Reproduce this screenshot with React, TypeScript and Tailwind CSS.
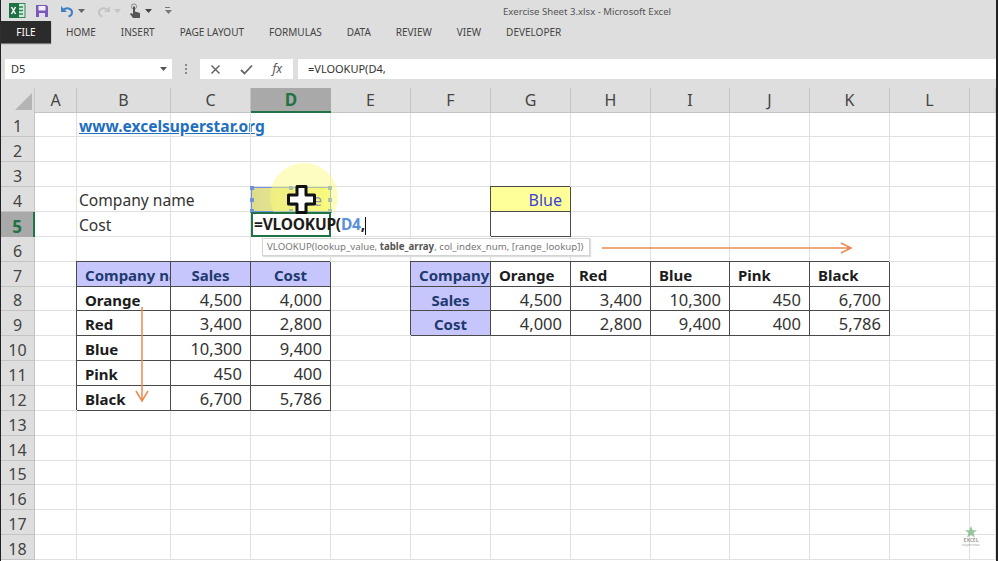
const columns = ['A', 'B', 'C', 'D', 'E', 'F', 'G', 'H', 'I', 'J', 'K', 'L', ''];
const tabs = ['HOME', 'INSERT', 'PAGE LAYOUT', 'FORMULAS', 'DATA', 'REVIEW', 'VIEW', 'DEVELOPER'];

const box = 'border-r border-b border-r-[#4a4a4a] border-b-[#4a4a4a] shadow-[-1px_-1px_0_#4a4a4a]';
const head = `${box} bg-[#c6c6fc] text-[#1f3a70] font-bold text-center text-[15px]`;
const side = `${box} bg-[#c6c6fc] text-[#1f3a70] font-bold text-center text-[15px]`;
const label = `${box} font-bold text-[#1c1c1c] pl-[8px] text-left text-[15px]`;
const num = `${box} text-[#333] text-right pr-[8px] text-[16.500px]`;

type Cell = { text?: string; cls?: string };

const cells: Record<string, Cell> = {
  B1: { text: 'www.excelsuperstar.org', cls: 'font-bold text-[#1f6fc0] underline pl-[2px] text-[15.500px] overflow-visible' },
  B4: { text: 'Company name', cls: 'text-[#333] pl-[2px] text-[15.600px] overflow-visible' },
  B5: { text: 'Cost', cls: 'text-[#333] pl-[2px] text-[15.600px]' },
  G4: { text: 'Blue', cls: `${box} bg-[#ffff99] text-[#3d44d8] text-right pr-[8px]` },
  G5: { cls: box },
  B7: { text: 'Company name', cls: `${head} !text-left pl-[8px]` },
  C7: { text: 'Sales', cls: head },
  D7: { text: 'Cost', cls: head },
  F7: { text: 'Company name', cls: `${head} !text-left pl-[8px]` },
  G7: { text: 'Orange', cls: label },
  H7: { text: 'Red', cls: label },
  I7: { text: 'Blue', cls: label },
  J7: { text: 'Pink', cls: label },
  K7: { text: 'Black', cls: label },
  F8: { text: 'Sales', cls: side },
  G8: { text: '4,500', cls: num },
  H8: { text: '3,400', cls: num },
  I8: { text: '10,300', cls: num },
  J8: { text: '450', cls: num },
  K8: { text: '6,700', cls: num },
  F9: { text: 'Cost', cls: side },
  G9: { text: '4,000', cls: num },
  H9: { text: '2,800', cls: num },
  I9: { text: '9,400', cls: num },
  J9: { text: '400', cls: num },
  K9: { text: '5,786', cls: num },
  B8: { text: 'Orange', cls: label },
  C8: { text: '4,500', cls: num },
  D8: { text: '4,000', cls: num },
  B9: { text: 'Red', cls: label },
  C9: { text: '3,400', cls: num },
  D9: { text: '2,800', cls: num },
  B10: { text: 'Blue', cls: label },
  C10: { text: '10,300', cls: num },
  D10: { text: '9,400', cls: num },
  B11: { text: 'Pink', cls: label },
  C11: { text: '450', cls: num },
  D11: { text: '400', cls: num },
  B12: { text: 'Black', cls: label },
  C12: { text: '6,700', cls: num },
  D12: { text: '5,786', cls: num },
};

const ExcelLogo = () => (
  <svg width="18" height="17" viewBox="0 0 18 17">
    <rect x="7" y="1.500" width="10" height="14" fill="#d5e8da" stroke="#2f8a57" />
    <path d="M10 5h5M10 8.500h5M10 12h5" stroke="#2f8a57" strokeWidth="1.500" />
    <rect x="1" y="1" width="10" height="15" fill="#1e7145" />
    <path d="M3.500 5l4 7M7.500 5l-4 7" stroke="#fff" strokeWidth="1.500" />
  </svg>
);

const SaveIcon = () => (
  <svg width="14" height="14" viewBox="0 0 14 14">
    <path d="M1 1h10.500L13 2.500V13H1z" fill="#7a58b8" />
    <rect x="3.500" y="2" width="7" height="4.500" fill="#f1edf8" />
    <rect x="4" y="9" width="6" height="4" fill="#e4ddf2" />
  </svg>
);

const UndoIcon = ({ color, flip }: { color: string; flip?: boolean }) => (
  <svg width="15" height="14" viewBox="0 0 15 14" className={flip ? '-scale-x-100' : ''}>
    <path d="M3 6.500c3-3.500 9-2.500 9 2 0 2-1.500 3.500-3.500 4" fill="none" stroke={color} strokeWidth="2" />
    <path d="M1 2v6h6z" fill={color} />
  </svg>
);

const TouchIcon = () => (
  <svg width="13" height="16" viewBox="0 0 13 16">
    <circle cx="5" cy="3.500" r="2.600" fill="none" stroke="#8a8a8a" />
    <path d="M4 3.500h2v5l5 1.500v5H4l-3-4 1-1 2 1z" fill="#555" />
  </svg>
);

const Caret = ({ color = '#666' }: { color?: string }) => (
  <svg width="7" height="4" viewBox="0 0 7 4">
    <path d="M0 0h7L3.500 4z" fill={color} />
  </svg>
);

export default function App() {
  return (
    <div className="relative w-[998px] h-[561px] overflow-hidden bg-[#dedede] pl-px pr-[2px] font-['Lato',sans-serif] shadow-[inset_1px_0_0_#222,inset_-2px_0_0_#222]">
      {/* Title bar */}
      <div className="relative h-[21px] flex items-center pl-[7px]">
        <ExcelLogo />
        <div className="ml-[9px]"><SaveIcon /></div>
        <div className="ml-[11px] flex items-center gap-[3px]">
          <UndoIcon color="#3f7fc4" />
          <Caret />
        </div>
        <div className="ml-[11px] flex items-center gap-[3px]">
          <UndoIcon color="#c4c4c4" flip />
          <Caret color="#c4c4c4" />
        </div>
        <div className="ml-[8px] flex items-center gap-[3px]">
          <TouchIcon />
          <Caret color="#444" />
        </div>
        <div className="ml-[13px] flex flex-col gap-[2px]">
          <div className="w-[5px] h-px bg-[#777]" />
          <Caret color="#777" />
        </div>
        <div className="absolute left-[502px] top-[4px] text-[9.600px] leading-[15px] text-[#555] font-['Open_Sans',sans-serif]">
          Exercise Sheet 3.xlsx - Microsoft Excel
        </div>
      </div>

      {/* Ribbon tabs */}
      <div className="h-[22px] flex items-stretch font-['Open_Sans',sans-serif] text-[10px] text-[#444]">
        <div className="w-[50px] bg-[#2b2b2b] text-white flex items-center justify-center shadow-[0_1px_1px_#777]">FILE</div>
        <div className="ml-[15px] flex items-center gap-[25px]">
          {tabs.map((tab) => (
            <span key={tab}>{tab}</span>
          ))}
        </div>
      </div>

      {/* Formula bar */}
      <div className="mt-[16px] h-[20px] flex items-stretch text-[11px] text-[#333] font-['Open_Sans',sans-serif]">
        <div className="ml-[4px] w-[167px] bg-white flex items-center justify-between pl-[6px] pr-[5px]">
          <span>D5</span>
          <Caret color="#555" />
        </div>
        <div className="w-[28px] flex flex-col items-center justify-center gap-[2px]">
          <div className="w-[2px] h-[2px] bg-[#888]" />
          <div className="w-[2px] h-[2px] bg-[#888]" />
          <div className="w-[2px] h-[2px] bg-[#888]" />
        </div>
        <div className="w-[93px] bg-white flex items-center justify-between pl-[10px] pr-[11px]">
          <svg width="11" height="11" viewBox="0 0 11 11">
            <path d="M1.500 1.500l8 8M9.500 1.500l-8 8" stroke="#666" strokeWidth="1.500" />
          </svg>
          <svg width="13" height="11" viewBox="0 0 13 11">
            <path d="M1 6l3.500 3.500L12 1.500" fill="none" stroke="#666" strokeWidth="1.800" />
          </svg>
          <span className="font-['Liberation_Serif',serif] italic text-[12px] text-[#555]">fx</span>
        </div>
        <div className="ml-[5px] flex-1 bg-white flex items-center pl-[10px]">=VLOOKUP(D4,</div>
      </div>

      {/* Sheet */}
      <div className="mt-[9px] h-[473px] grid grid-cols-[34px_42px_94px_80px_80px_80px_80px_80px_80px_79px_80px_80px_80px_26px] grid-rows-[24.500px] auto-rows-[24.870px] text-[16px] bg-white">
        <div className="relative bg-[#dedede] border-r border-[#c8c8c8]">
          <div className="absolute right-[2px] bottom-[3px] w-0 h-0 border-l-[17px] border-l-transparent border-b-[17px] border-b-[#b4b4b4]" />
        </div>
        {columns.map((col) =>
          col === 'D' ? (
            <div key={col} className="bg-[#a9a9a9] border-b-2 border-[#217346] pt-px flex items-center justify-center font-bold text-[#217346] text-[17px]">
              {col}
            </div>
          ) : (
            <div key={col || 'M'} className="bg-[#dedede] border-r border-b border-[#c4c4c4] pt-px flex items-center justify-center text-[#444] text-[16px]">
              {col}
            </div>
          ),
        )}
        {Array.from({ length: 18 }, (_, i) => i + 1).map((row) => (
          <Row key={row} row={row} />
        ))}
      </div>

      {/* Tooltip */}
      <div className="absolute left-[262px] top-[238px] h-[18px] w-[328px] bg-white border border-[#d4d4d4] shadow-[1px_1px_1px_#ddd] flex items-center pl-[4px] text-[9.700px] text-[#777] font-['Open_Sans',sans-serif] whitespace-nowrap">
        VLOOKUP(lookup_value,&nbsp;<b className="text-[#555]">table_array</b>, col_index_num, [range_lookup])
      </div>

      {/* Presenter arrows */}
      <svg className="absolute left-[600px] top-[240px]" width="256" height="16" viewBox="0 0 256 16">
        <path d="M2 8h249M241 3l10 5-10 5" fill="none" stroke="#ec8a50" strokeWidth="1.500" />
      </svg>
      <svg className="absolute left-[134px] top-[305px]" width="16" height="98" viewBox="0 0 16 98">
        <path d="M8 2v94M2 86l6 10 6-10" fill="none" stroke="#ec8a50" strokeWidth="1.500" />
      </svg>

      {/* Cursor highlight stops at the edit cell, then the cursor */}
      <div className="absolute left-[270px] top-[163px] w-[68px] h-[49px] overflow-hidden pointer-events-none">
        <div className="w-[68px] h-[68px] rounded-full bg-[#fbfb78]/45" />
      </div>
      <svg className="absolute left-[286px] top-[184px]" width="31" height="31" viewBox="0 0 31 31">
        <path d="M11 2.500h9v8.500h8.500v9H20v8.500h-9V20H2.500v-9H11z" fill="#fff" stroke="#111" strokeWidth="3" strokeLinejoin="round" />
      </svg>

      {/* Watermark */}
      <div className="absolute left-[962px] top-[526px] flex flex-col items-center text-[#777] opacity-70">
        <svg width="14" height="12" viewBox="0 0 14 12">
          <path d="M7 0l1.700 4.200H13L9.500 7l1.300 4.500L7 9l-3.800 2.500L4.500 7 1 4.200h4.300z" fill="#6fae78" />
        </svg>
        <span className="text-[5px] leading-[5px] font-bold">EXCEL</span>
        <span className="text-[4px] leading-[4px]">superstar</span>
      </div>
    </div>
  );
}

function Row({ row }: { row: number }) {
  return (
    <>
      {row === 5 ? (
        <div className="bg-[#a9a9a9] border-r-2 border-[#217346] pt-[4px] flex items-center justify-center font-bold text-[#217346] text-[17px]">
          {row}
        </div>
      ) : (
        <div className="bg-[#dedede] border-r border-b border-[#c4c4c4] pt-[4px] flex items-center justify-center text-[#444]">
          {row}
        </div>
      )}
      {columns.map((col) => {
        const id = `${col}${row}`;
        if (id === 'D4') return <ActiveLookup key={id} />;
        if (id === 'D5') return <FormulaCell key={id} />;
        const cell = cells[id];
        return (
          <div
            key={id}
            className={`h-full leading-[26px] whitespace-nowrap border-r border-b border-[#e0e0e0] ${cell?.cls ?? ''} ${cell?.cls?.includes('overflow-visible') ? '' : 'overflow-hidden'}`}
          >
            {cell?.text}
          </div>
        );
      })}
    </>
  );
}

const handles = [
  '-left-[2px] -top-[2px]',
  'left-[37px] -top-[2px]',
  '-right-[2px] -top-[2px]',
  '-left-[2px] top-[10px]',
  '-right-[2px] top-[10px]',
  '-left-[2px] -bottom-[2px]',
  'left-[37px] -bottom-[2px]',
  '-right-[2px] -bottom-[2px]',
];

function ActiveLookup() {
  return (
    <div className="relative bg-linear-to-r from-[#dcdc90] to-[#f8f880] border border-[#6f92dc] text-[#3d44d8] text-right pr-[8px] leading-[25px]">
      Blue
      {handles.map((pos) => (
        <div key={pos} className={`absolute w-[4px] h-[4px] bg-[#6f92dc] ${pos}`} />
      ))}
    </div>
  );
}

function FormulaCell() {
  return (
    <div className="relative border-2 border-[#217346] whitespace-nowrap font-bold text-[15.500px] tracking-[-0.2px] leading-[21px] pl-[1px] text-[#1c1c1c]">
      =VLOOKUP(<span className="text-[#5b8fdc]">D4</span>,
      <span className="inline-block w-px h-[18px] bg-[#111] align-middle" />
    </div>
  );
}
